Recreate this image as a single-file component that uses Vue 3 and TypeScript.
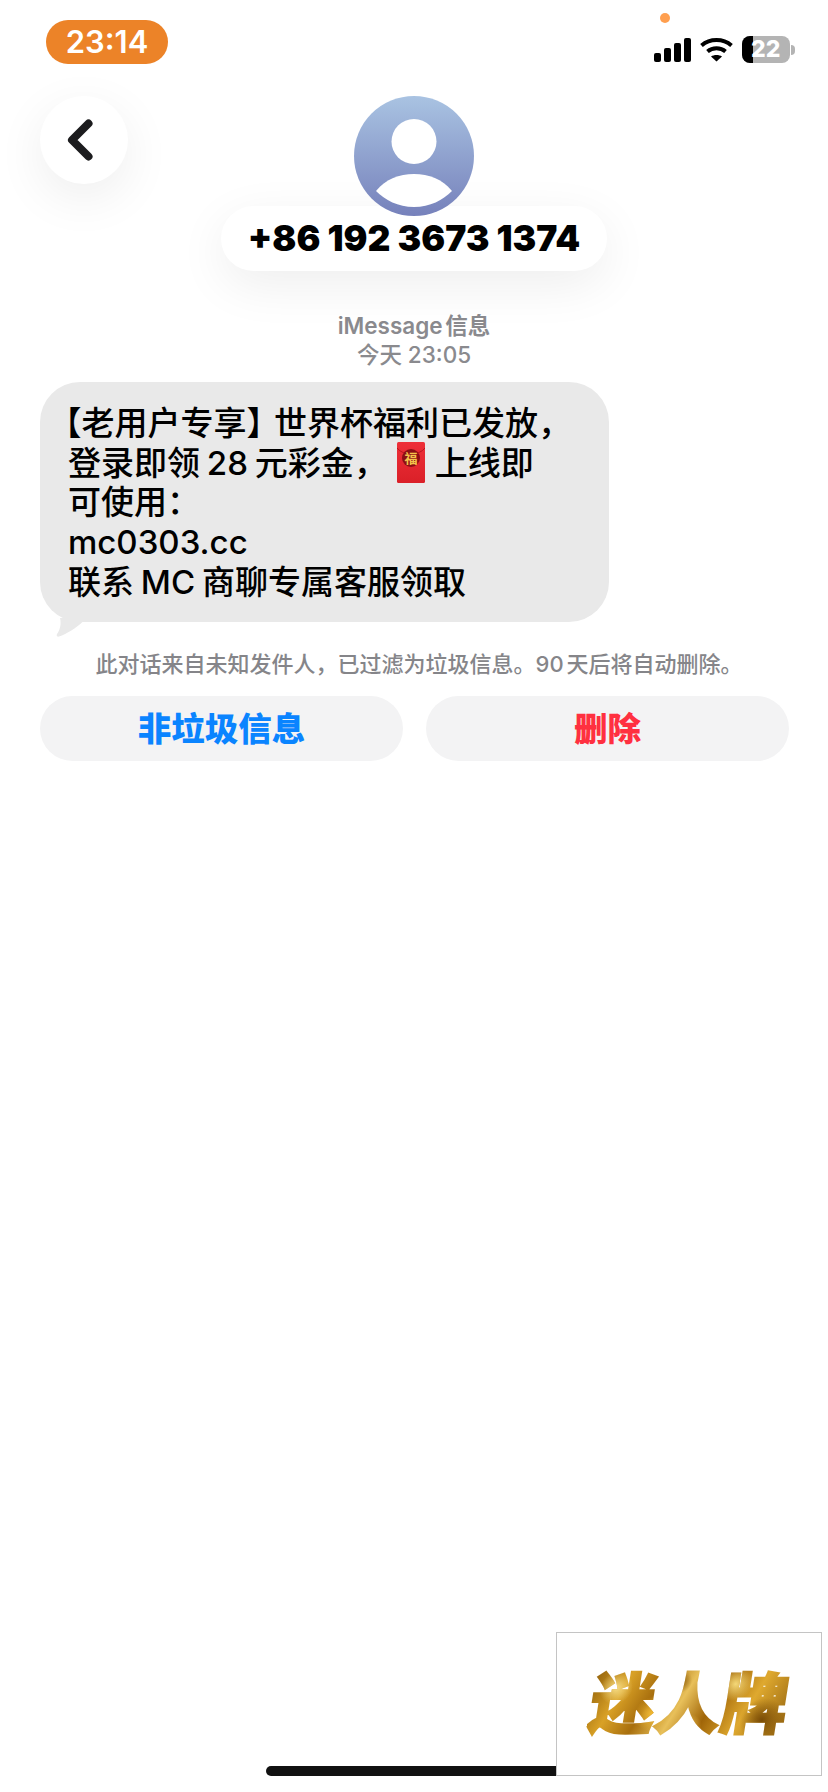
<script setup lang="ts">
const bars = [9, 14, 19, 24];
</script>

<template>
  <div class="screen">
    <div class="status">
      <div class="clock">23:14</div>
      <span class="mic-dot"></span>
      <div class="status__icons">
        <div class="signal">
          <span v-for="h in bars" :key="h" class="signal__bar" :style="{ height: h + 'px' }"></span>
        </div>
        <svg class="wifi" width="33" height="25" viewBox="0 0 33 25">
          <path d="M1.500 8.500C10 1.200 23 1.200 31.500 8.500" fill="none" stroke="#000" stroke-width="4" />
          <path d="M7.500 14.500C12.500 10.200 20.500 10.200 25.500 14.500" fill="none" stroke="#000" stroke-width="4" />
          <path d="M11 19.500C14 17.500 19 17.500 22 19.500L16.500 24.500Z" fill="#000" />
        </svg>
        <div class="battery">
          <div class="battery__body">
            <span class="battery__fill"></span>
            <span class="battery__num">22</span>
          </div>
          <span class="battery__nub"></span>
        </div>
      </div>
    </div>

    <header class="head">
      <button class="back">
        <svg width="28" height="42" viewBox="0 0 28 42">
          <path d="M22.500 4.500L6 21L22.500 37.500" fill="none" stroke="#1c1c1e" stroke-width="8" stroke-linecap="round" stroke-linejoin="round" />
        </svg>
      </button>
      <div class="contact">
        <div class="avatar">
          <svg width="120" height="120" viewBox="0 0 120 120">
            <circle cx="60" cy="45.500" r="22.500" fill="#fff" />
            <path d="M22 95C32 83 45 78 60 78C75 78 88 83 98 95C89 104 76 111 60 111C44 111 31 104 22 95Z" fill="#fff" />
          </svg>
        </div>
        <div class="number">+86 192 3673 1374</div>
      </div>
    </header>

    <div class="meta">
      <div class="meta__service">iMessage 信息</div>
      <div class="meta__time">今天 23:05</div>
    </div>

    <div class="bubble">
      <div><span class="bracket bracket--open">【</span>老用户专享<span class="bracket bracket--close">】</span>世界杯福利已发放，</div>
      <div class="line">
        登录即领 28 元彩金，
        <svg class="envelope" width="28" height="41" viewBox="0 0 28 41">
          <defs>
            <linearGradient id="red" x1="0" y1="0" x2="0" y2="1">
              <stop offset="0" stop-color="#ee2f38" />
              <stop offset="1" stop-color="#da2028" />
            </linearGradient>
          </defs>
          <rect width="28" height="41" rx="1.500" fill="url(#red)" />
          <path d="M0 6C6 14 22 14 28 6" fill="none" stroke="#b9161f" stroke-width="1" />
          <circle cx="14" cy="16" r="9" fill="#8c0f14" />
          <text x="14" y="21" class="envelope__char">福</text>
        </svg>
        上线即
      </div>
      <div>可使用：</div>
      <div>mc0303.cc</div>
      <div>联系 MC 商聊专属客服领取</div>
      <svg class="bubble__tail" width="32" height="28" viewBox="0 0 32 28">
        <path d="M8 8C9.500 14 8 20 5 24C4 26 5.500 27 7 26.500C15 24 24 18 31 11.500L31 8Z" fill="#e9e9e9" />
      </svg>
    </div>

    <p class="notice">此对话来自未知发件人，已过滤为垃圾信息。90 天后将自动删除。</p>

    <div class="actions">
      <button class="action action--blue">非垃圾信息</button>
      <button class="action action--red">删除</button>
    </div>

    <div class="home-bar"></div>

    <div class="watermark">
      <span class="watermark__text">迷人牌</span>
    </div>
  </div>
</template>

<style>
html,
body {
  margin: 0;
  background: #fff;
}
</style>

<style scoped>
.screen {
  position: relative;
  width: 828px;
  height: 1792px;
  overflow: hidden;
  background: #fff;
  color: #000;
  font-family: Inter, "Noto Sans CJK SC", sans-serif;
}

.status {
  position: relative;
  display: flex;
  justify-content: space-between;
  align-items: center;
  height: 44px;
  padding: 20px 33px 0 46px;
}

.clock {
  width: 122px;
  height: 44px;
  border-radius: 22px;
  background: #ec8328;
  color: #fff;
  font-size: 31px;
  font-weight: 600;
  line-height: 44px;
  text-align: center;
}

.mic-dot {
  position: absolute;
  left: 660px;
  top: 13px;
  width: 10px;
  height: 10px;
  border-radius: 50%;
  background: #ff9f4f;
}

.status__icons {
  display: flex;
  align-items: center;
  gap: 9px;
  margin-top: 15px;
}

.signal {
  display: flex;
  align-items: flex-end;
  gap: 3px;
  height: 24px;
}

.signal__bar {
  width: 7px;
  border-radius: 2px;
  background: #000;
}

.battery {
  display: flex;
  align-items: center;
  gap: 1px;
}

.battery__body {
  position: relative;
  width: 48px;
  height: 27px;
  border-radius: 8px;
  overflow: hidden;
  background: #b4b4b4;
}

.battery__fill {
  position: absolute;
  left: 0;
  top: 0;
  bottom: 0;
  width: 11px;
  background: #000;
}

.battery__num {
  position: absolute;
  left: 9px;
  top: 0;
  color: #fff;
  font-size: 23px;
  font-weight: 800;
  line-height: 27px;
}

.battery__nub {
  width: 4px;
  height: 10px;
  border-radius: 0 4px 4px 0;
  background: #b4b4b4;
}

.head {
  position: relative;
  display: flex;
  justify-content: center;
  height: 175px;
  margin-top: 32px;
}

.back {
  position: absolute;
  left: 40px;
  top: 0;
  display: flex;
  align-items: center;
  justify-content: center;
  width: 88px;
  height: 88px;
  padding: 0 8px 0 0;
  border: 0;
  border-radius: 50%;
  background: #fff;
  box-shadow: 0 14px 50px rgba(0, 0, 0, 0.07);
}

.contact {
  display: flex;
  flex-direction: column;
  align-items: center;
}

.avatar {
  position: relative;
  z-index: 1;
  width: 120px;
  height: 120px;
  border-radius: 50%;
  background: linear-gradient(#a9c3e2, #7681bb);
}

.avatar svg {
  display: block;
}

.number {
  width: 386px;
  height: 65px;
  margin-top: -10px;
  border-radius: 33px;
  background: #fff;
  box-shadow: 0 14px 50px rgba(0, 0, 0, 0.07);
  font-size: 35.500px;
  font-weight: 900;
  line-height: 65px;
  text-align: center;
  white-space: nowrap;
}

.meta {
  margin-top: 40px;
  color: #8a8a8e;
  font-size: 22.500px;
  font-weight: 500;
  line-height: 29px;
  text-align: center;
  word-spacing: -3px;
}

.meta__service {
  font-weight: 600;
}

.meta__time {
  word-spacing: 0;
}

.bubble {
  position: relative;
  box-sizing: border-box;
  width: 569px;
  height: 240px;
  margin: 13px 0 0 40px;
  padding: 22px 20px 0 28px;
  border-radius: 40px;
  background: #e9e9e9;
  font-size: 33px;
  font-weight: 500;
  line-height: 39.700px;
  white-space: nowrap;
  word-spacing: -2px;
}

.bracket {
  font-feature-settings: "halt";
}

.bracket--open {
  margin-left: -3px;
}

.bracket--close {
  margin-right: 11px;
}

.line {
  display: flex;
  align-items: center;
  gap: 10px;
  height: 39.700px;
}

.envelope {
  flex: none;
  margin-top: -2px;
}

.envelope__char {
  fill: #f3c24c;
  font-size: 13px;
  font-weight: 700;
  text-anchor: middle;
}

.bubble__tail {
  position: absolute;
  left: 12px;
  top: 228px;
}

.notice {
  margin: 28px 0 0;
  padding-left: 10px;
  color: #858589;
  font-size: 22px;
  font-weight: 500;
  line-height: 28px;
  text-align: center;
  word-spacing: -3px;
}

.actions {
  display: flex;
  gap: 23px;
  margin: 18px 39px 0 40px;
}

.action {
  flex: 1;
  height: 65px;
  padding: 0 0 4px;
  border: 0;
  border-radius: 33px;
  background: #f3f3f4;
  font-family: inherit;
  font-size: 33.500px;
  font-weight: 900;
}

.action--blue {
  color: #0a84ff;
}

.action--red {
  color: #ff3040;
}

.home-bar {
  position: absolute;
  left: 266px;
  top: 1766px;
  width: 296px;
  height: 10px;
  border-radius: 5px;
  background: #111;
}

.watermark {
  position: absolute;
  left: 556px;
  top: 1632px;
  display: flex;
  align-items: center;
  justify-content: center;
  box-sizing: border-box;
  width: 266px;
  height: 144px;
  border: 1px solid #c4c4c4;
  background: #fff;
}

.watermark__text {
  background:
    radial-gradient(circle at 12% 30%, #f6dc84 0, transparent 9%),
    radial-gradient(circle at 32% 62%, #f0b832 0, transparent 12%),
    radial-gradient(circle at 52% 78%, #e2b040 0, transparent 10%),
    radial-gradient(circle at 72% 25%, #f4d878 0, transparent 11%),
    radial-gradient(circle at 88% 70%, #7a4c06 0, transparent 12%),
    radial-gradient(circle at 44% 22%, #8a5a08 0, transparent 9%),
    linear-gradient(115deg, #8a5a08 0%, #d9a126 18%, #a86f0e 32%, #e8c05a 46%, #a06508 60%, #dfa92f 76%, #8c5c0c 100%);
  -webkit-background-clip: text;
  background-clip: text;
  color: transparent;
  -webkit-text-stroke: 2px transparent;
  font-size: 66px;
  font-weight: 900;
  line-height: 80px;
  transform: skewX(-9deg);
}
</style>
